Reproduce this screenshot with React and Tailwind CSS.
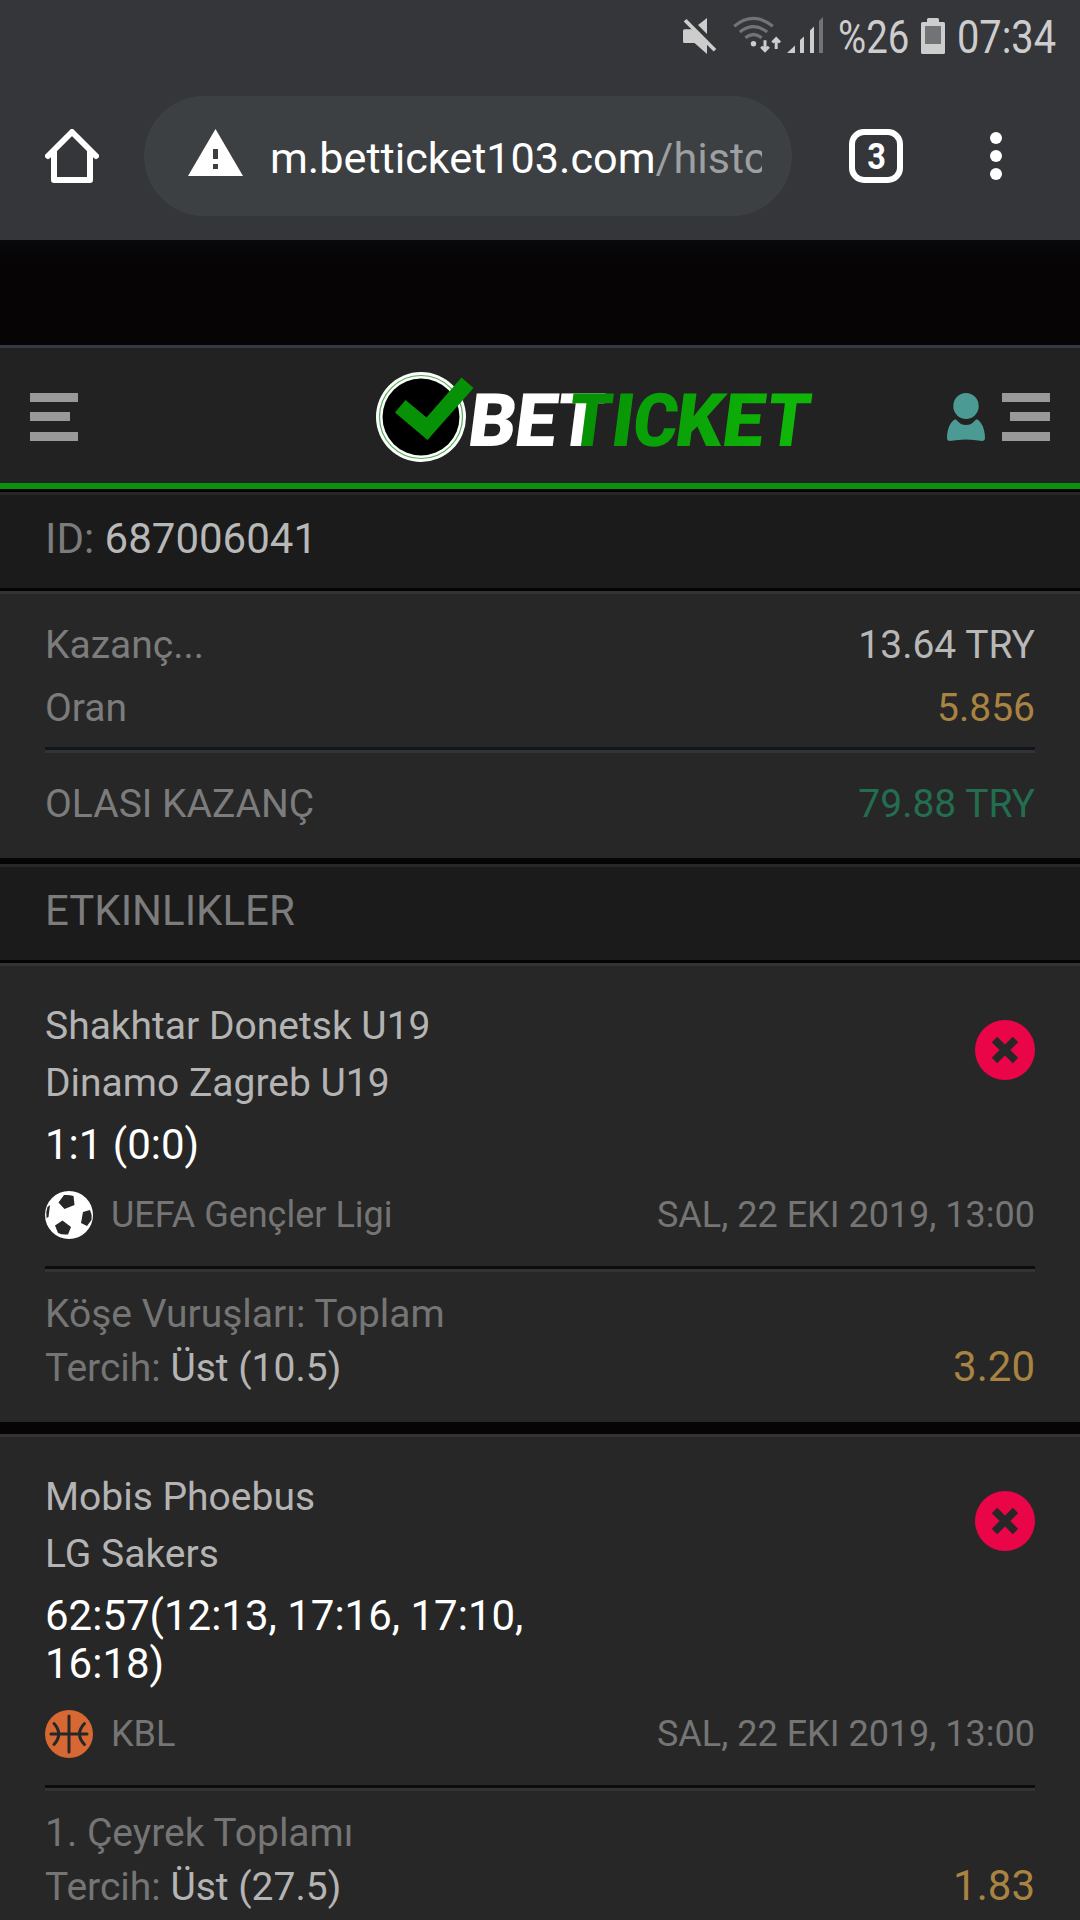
import React from 'react';

const events = [
    {
        id: 1,
        home: 'Shakhtar Donetsk U19',
        away: 'Dinamo Zagreb U19',
        score: '1:1 (0:0)',
        sport: 'football',
        league: 'UEFA Gençler Ligi',
        date: 'SAL, 22 EKI 2019, 13:00',
        market: 'Köşe Vuruşları: Toplam',
        pick: 'Üst (10.5)',
        odds: '3.20',
    },
    {
        id: 2,
        home: 'Mobis Phoebus',
        away: 'LG Sakers',
        score: '62:57(12:13, 17:16, 17:10, 16:18)',
        sport: 'basketball',
        league: 'KBL',
        date: 'SAL, 22 EKI 2019, 13:00',
        market: '1. Çeyrek Toplamı',
        pick: 'Üst (27.5)',
        odds: '1.83',
    },
];

const StatusBar = () => (
    <div className="flex h-[72px] items-start pl-[683px] text-[46px] text-[#cdcdcd]">
        <svg className="mt-[17px] h-[38px] w-[34px] shrink-0" viewBox="0 0 34 38" fill="#cdcdcd">
            <path d="M1.5 12.3H9L24 27v10L11.5 26H1.5Q0 26 0 24.5V14Q0 12.3 1.5 12.3Z" />
            <path d="M24 1v16L15 8Z" />
            <path d="M3.5 2 33.3 32 30.7 34.5.7 4.5Z" />
        </svg>
        <svg className="mt-[16px] ml-[16px] h-[38px] w-[50px] shrink-0" viewBox="0 0 50 38" fill="none">
            <path d="M1.2 10.2Q20.5-5.4 39.8 10.2M6.8 16Q20.5 5.2 34.2 16M12.3 21.8Q20.5 15.2 28.7 21.8" stroke="#727376" strokeWidth="3.2" />
            <circle cx="20.5" cy="27.7" r="2.7" fill="#cdcdcd" />
            <path d="M32 24.3v10M28.2 30.8l3.8 3.8 3.8-3.8M43.2 33V23M39.4 26.5l3.8-3.8 3.8 3.8" stroke="#cdcdcd" strokeWidth="3" />
        </svg>
        <svg className="mt-[17px] ml-[4px] h-[37px] w-[37px] shrink-0" viewBox="0 0 37 37" fill="#cdcdcd">
            <path d="M0 36 8 28.5V36ZM13 23 17 19.5V36H13ZM23 13.5 27 9.5V36H23Z" />
            <path d="M32 4 36 0V36H32Z" fill="#727376" />
        </svg>
        <span className="ml-[14px] w-[83px] origin-left scale-x-[0.835] leading-[75px]">%26</span>
        <svg className="mt-[18px] h-[36px] w-[24px] shrink-0" viewBox="0 0 24 36">
            <path d="M6 4V1.5Q6 0 7.5 0H16.5Q18 0 18 1.5V4H22.5Q24 4 24 5.5V34.5Q24 36 22.5 36H1.5Q0 36 0 34.5V5.5Q0 4 1.5 4Z" fill="#cdcdcd" />
            <path d="M4 8H20V26H4Z" fill="#727376" />
        </svg>
        <span className="ml-[12px] origin-left scale-x-[0.865] leading-[75px]">07:34</span>
    </div>
);

const BrowserBar = () => (
    <div className="flex h-[168px] items-start pt-6 pl-[45px]">
        <svg className="mt-[33px] h-[54px] w-[54px] shrink-0" viewBox="0 0 54 54" fill="none" stroke="#fff" strokeWidth="6" strokeLinecap="round" strokeLinejoin="round">
            <path d="M3 27 27 3 51 27M9 23V51H45V23" />
        </svg>
        <div className="ml-[45px] flex h-[120px] w-[648px] items-start rounded-full bg-[#3c4042] pl-[44px]">
            <svg className="mt-[33px] h-[47px] w-[55px] shrink-0" viewBox="0 0 55 47">
                <path d="M27.5 0 55 47H0Z" fill="#fff" />
                <path d="M25 20h5v10h-5ZM25 35h5v5h-5Z" fill="#3c4042" />
            </svg>
            <div className="ml-[27px] w-[492px] overflow-hidden text-[43.2px] leading-[126px] whitespace-nowrap text-white">
                m.betticket103.com<span className="text-[#9d9fa0]">/histo</span>
            </div>
        </div>
        <div className="mt-[33px] ml-[57px] flex h-[54px] w-[54px] items-center justify-center rounded-[15px] border-[6px] border-white pl-px text-[37px] leading-none font-bold text-white">
            <span className="scale-x-[0.88]">3</span>
        </div>
        <div className="mt-[36px] ml-[87px] flex flex-col gap-1.5">
            <span className="size-3 rounded-full bg-white" />
            <span className="size-3 rounded-full bg-white" />
            <span className="size-3 rounded-full bg-white" />
        </div>
    </div>
);

const Logo = () => (
    <svg className="mt-[22px] h-[94px] w-[440px]" viewBox="0 0 440 94">
        <defs>
            <linearGradient id="ticket" gradientUnits="userSpaceOnUse" x1="200" y1="0" x2="437" y2="0">
                <stop offset="0" stopColor="#079106" />
                <stop offset="1" stopColor="#0fb908" />
            </linearGradient>
        </defs>
        <circle cx="46" cy="47" r="45" fill="#fff" />
        <circle cx="46" cy="47" r="41.5" fill="none" stroke="#4fae50" strokeWidth="1.2" />
        <circle cx="46" cy="47" r="38.5" fill="#000" />
        <path d="M20 42.5 30.5 30 51.5 47.5 86.5 7.5 98.5 18 52.5 70Z" fill="#079106" />
        <g transform="translate(0 76) skewX(-7.3)" fontSize="74" fontWeight="900">
            <text x="91 137.5 178.5" fill="#fff">BET</text>
            <text transform="translate(190.5 0) scale(0.92 1)" fill="#079206">T</text>
            <text x="234" fill="url(#ticket)">I</text>
            <text transform="translate(255.5 0) scale(0.92 1)" fill="#0aa007">C</text>
            <text x="298 345" fill="url(#ticket)">KE</text>
            <text transform="translate(389 0) scale(0.92 1)" fill="#0fb508">T</text>
        </g>
    </svg>
);

const MenuBars = ({ align }) => (
    <div className={`flex w-12 flex-col ${align}`}>
        <span className="h-[9px] w-12 bg-[#999]" />
        <span className="mt-[10px] h-[9px] w-10 bg-[#999]" />
        <span className="mt-[11px] h-[9px] w-12 bg-[#999]" />
    </div>
);

const SiteHeader = () => (
    <header className="flex h-[144px] items-start border-t-[3px] border-b-[6px] border-t-[#353843] border-b-[#0a910d] bg-[#222] pl-[30px]">
        <div className="mt-[45px]"><MenuBars align="items-start" /></div>
        <div className="ml-[297px] h-[135px] w-[440px]"><Logo /></div>
        <svg className="mt-[45px] ml-[132px] h-[48px] w-[38px]" viewBox="0 0 38 48" fill="#4b9a93">
            <ellipse cx="19" cy="13" rx="12.7" ry="13" />
            <path d="M8 26.3Q9.5 26.5 11 28.5Q14 32 19 32T27 28.5Q28.5 26.5 30 26.3C35 29 38 37 38 45Q38 48 35 48Q27 46.5 19 46.5T3 48Q0 48 0 45C0 37 3 29 8 26.3Z" />
        </svg>
        <div className="mt-[45px] ml-[17px]"><MenuBars align="items-end" /></div>
    </header>
);

const SectionTitle = ({ children }) => (
    <div className="h-[99px] border-t-[3px] border-b-[3px] border-t-[#272727] border-b-[#040404] bg-[#1b1b1b] px-[45px] text-[42px] leading-[87px] text-[#7c7c7c]">
        {children}
    </div>
);

const FootballIcon = () => (
    <svg className="h-12 w-12" viewBox="0 0 48 48">
        <circle cx="24" cy="24" r="24" fill="#fff" />
        <g fill="#272727">
            <path d="M19 4Q24 3.5 28.5 5L29.5 14 19.5 18 13.5 11.5Z" />
            <path d="M38 21 45 19Q47.5 24 46.5 29L42 35 36 32Z" />
            <path d="M17.5 29.5 26 36 23 43.5Q17 44 13 42L10 34.5Z" />
            <path d="M2.5 16 5 14 3.5 26 1.5 27Q.5 21 2.5 16Z" />
        </g>
    </svg>
);

const BasketballIcon = () => (
    <svg className="h-12 w-12" viewBox="0 0 48 48">
        <circle cx="24" cy="24" r="24" fill="#d66834" />
        <path d="M24 6V42M6 24H42M9 13.5Q18.5 24 9 34.5M39.5 13.5Q29.5 24 39.5 34.5" fill="none" stroke="#272727" strokeWidth="3" strokeLinecap="round" />
    </svg>
);

const EventCard = ({ event }) => (
    <article className="border-t-[3px] border-[#333] bg-[#272727] px-[45px] pt-[32px] pb-[27px] text-[39px] text-[#757575]">
        <div className="flex items-start justify-between">
            <div className="w-[495px]">
                <div className="leading-[57px] text-[#b4b4b4]">{event.home}</div>
                <div className="leading-[57px] text-[#b4b4b4]">{event.away}</div>
                <div className="mt-[9px] text-[42px] leading-[48px] text-white">{event.score}</div>
            </div>
            <svg className="mt-[22px] h-[60px] w-[60px]" viewBox="0 0 60 60">
                <circle cx="30" cy="30" r="30" fill="#ea0448" />
                <path d="M19.5 19.5 40.5 40.5M40.5 19.5 19.5 40.5" stroke="#272727" strokeWidth="7.6" />
            </svg>
        </div>
        <div className="mt-[22px] flex h-12 items-center text-[36px] leading-[48px]">
            {event.sport === 'football' ? <FootballIcon /> : <BasketballIcon />}
            <span className="ml-[18px]">{event.league}</span>
            <span className="ml-auto">{event.date}</span>
        </div>
        <div className="mt-[27px] h-[6px] border-t-[3px] border-[#0e0c0c] bg-[#333]" />
        <div className="pt-[15px] leading-[54px]">{event.market}</div>
        <div className="flex h-[54px] justify-between leading-[54px]">
            <span>Tercih: <span className="text-[#b4b4b4]">{event.pick}</span></span>
            <span className="text-[42px] leading-[52px] text-[#a88341]">{event.odds}</span>
        </div>
    </article>
);

const App = () => {
    return (
        <div className="h-[1920px] w-[1080px] overflow-hidden bg-[#060405] font-['Roboto',sans-serif]">
            <div className="h-[240px] bg-[#353639]">
                <StatusBar />
                <BrowserBar />
            </div>
            <div className="h-[105px] bg-linear-to-b from-[#07090b] to-[#060405] to-20%" />
            <SiteHeader />

            <div className="mt-[3px]">
                <SectionTitle>ID: <span className="text-[#b8b8b8]">687006041</span></SectionTitle>
            </div>
            <div className="border-t-[3px] border-[#333] bg-[#272727] px-[45px] pt-[20px] text-[39px] text-[#7c7c7c]">
                <div className="flex justify-between leading-[63px]">
                    <span>Kazanç...</span>
                    <span className="text-[#b8b8b8]">13.64 TRY</span>
                </div>
                <div className="flex justify-between leading-[63px]">
                    <span>Oran</span>
                    <span className="text-[#a88341]">5.856</span>
                </div>
                <div className="mt-[7px] h-[6px] border-t-[3px] border-[#111522] bg-[#333]" />
                <div className="flex h-[105px] justify-between leading-[102px]">
                    <span>OLASI KAZANÇ</span>
                    <span className="text-[#236e50]">79.88 TRY</span>
                </div>
            </div>

            <div className="mt-[6px]">
                <SectionTitle>ETKINLIKLER</SectionTitle>
            </div>
            <div className="flex flex-col gap-3">
                {events.map(event => <EventCard key={event.id} event={event} />)}
            </div>
        </div>
    );
};

export default App;
